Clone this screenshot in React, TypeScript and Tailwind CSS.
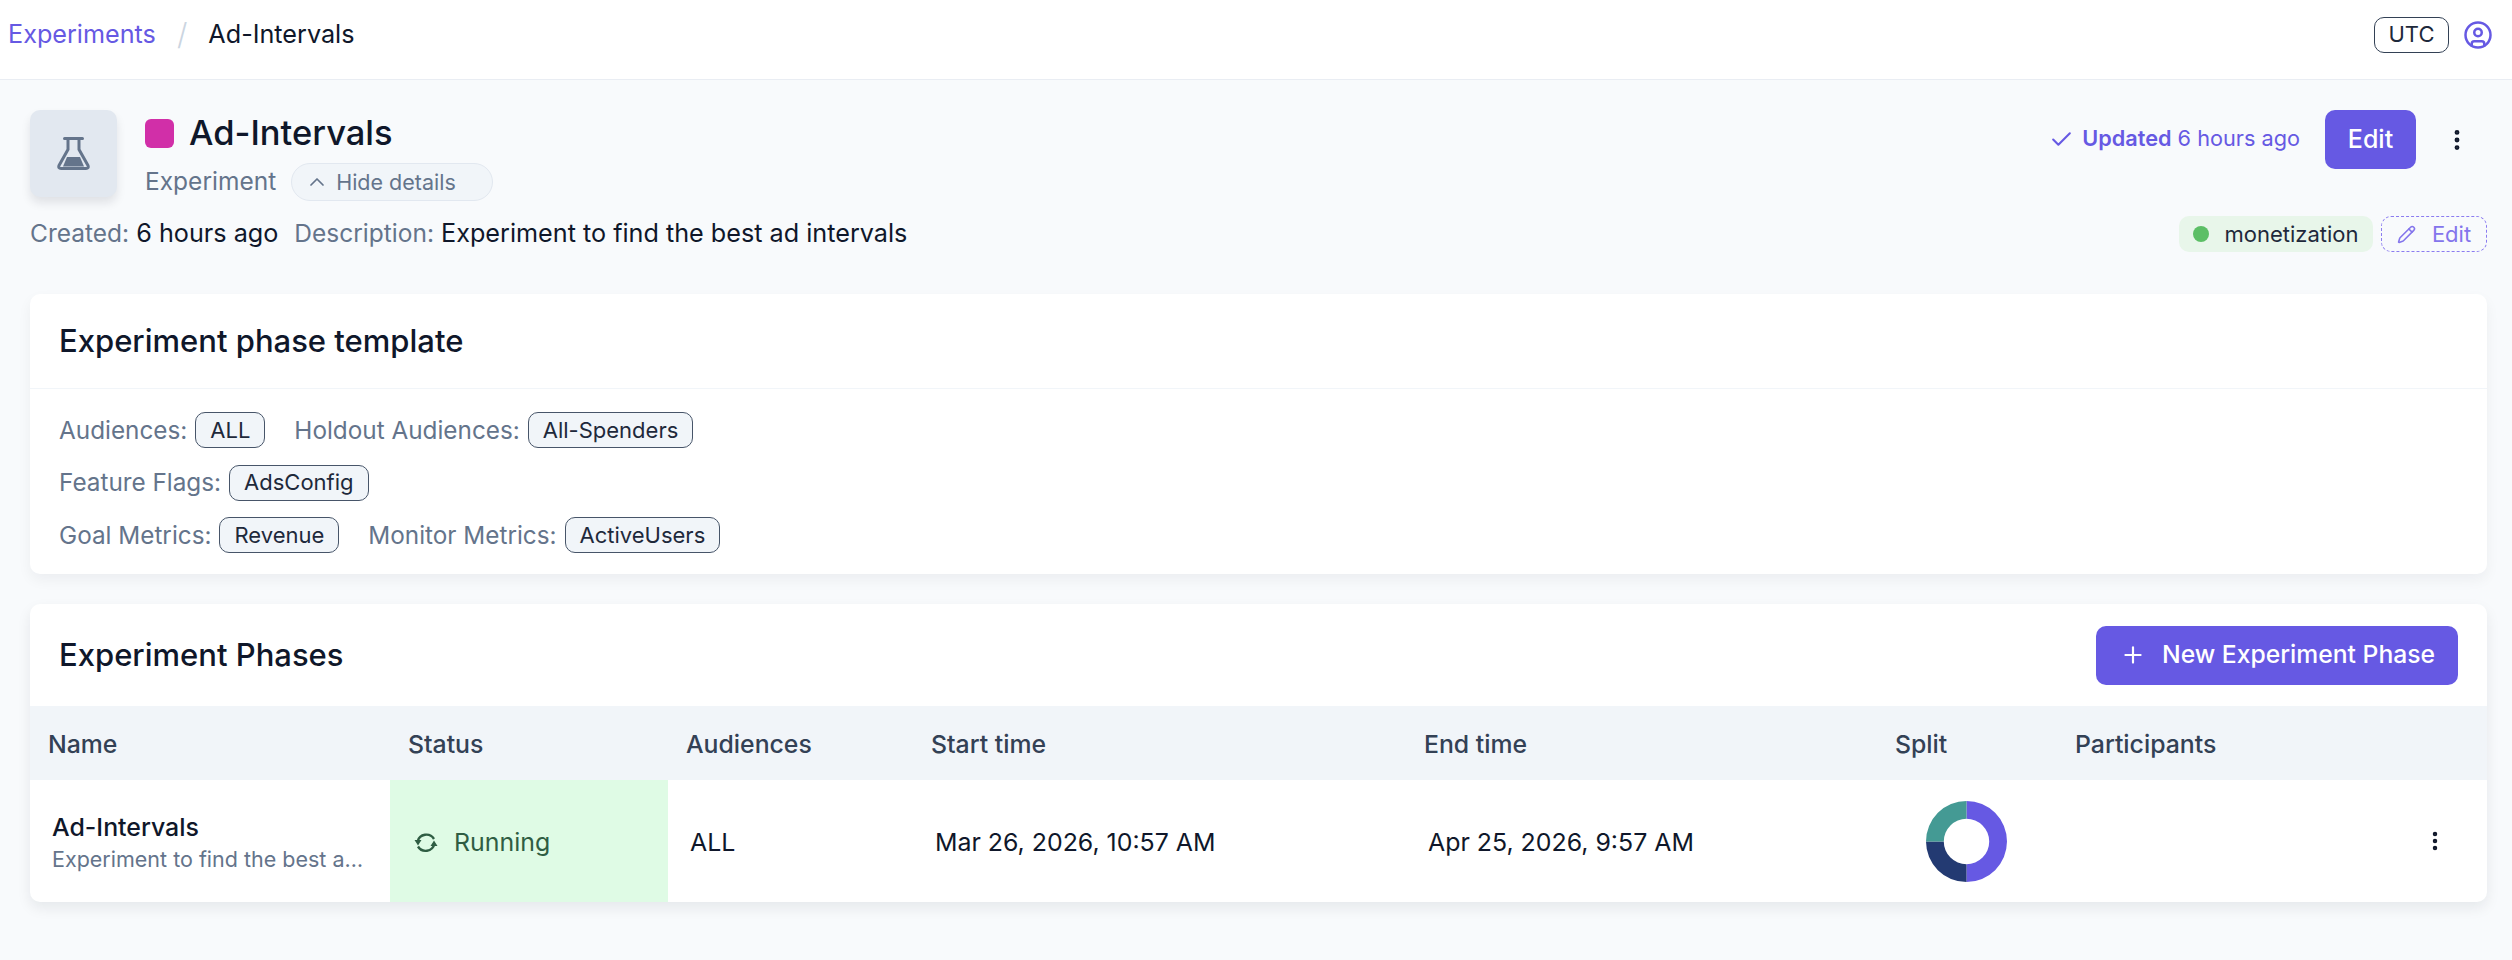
import { Check, ChevronUp, CircleUser, EllipsisVertical, Pencil, Plus } from "lucide-react";

function Pill({ children }: { children: React.ReactNode }) {
  return (
    <span className="inline-flex h-[36px] items-center rounded-[10px] border border-[#475569] bg-[#f1f5f9] px-[14px] text-[22px] text-[#1e293b]">
      {children}
    </span>
  );
}

function Label({ children }: { children: React.ReactNode }) {
  return <span className="mr-[8px] text-[24.3px] text-[#64748b]">{children}</span>;
}

const cols = "grid grid-cols-[360px_278px_245px_493px_471px_180px_430px]";

export default function App() {
  return (
    <div className="min-h-[960px] bg-[#f8fafc] font-['Inter',sans-serif] text-[#0f172a]">
      <header className="flex h-[80px] items-center justify-between border-b border-[#e9edf3] bg-white pb-[10px] pl-[8px] pr-[19px]">
        <nav className="flex items-center text-[25.2px]">
          <span className="text-[#6659e3]">Experiments</span>
          <span className="mx-[21px] text-[30px] font-light leading-none text-[#cbd5e1]">/</span>
          <span>Ad-Intervals</span>
        </nav>
        <div className="flex items-center gap-[14px]">
          <span className="flex h-[36px] w-[75px] items-center justify-center rounded-[10px] border border-[#334155] text-[22px] text-[#1e293b]">UTC</span>
          <CircleUser size={30} strokeWidth={2} className="text-[#6659e3]" />
        </div>
      </header>

      <main className="pl-[30px] pr-[25px] pt-[30px]">
        <section className="flex items-start justify-between">
          <div className="flex gap-[28px]">
            <div className="flex h-[87px] w-[87px] items-center justify-center rounded-[10px] bg-[#e2e8f0] shadow-[0_6px_10px_rgba(15,23,42,0.1)]">
              <svg width="33" height="33" viewBox="0 0 33 33" fill="none" stroke="#64748b" strokeWidth="3" strokeLinecap="round" strokeLinejoin="round">
                <path d="M7.5 1.5h18M11 1.5v11L2 28.5q-1 3 2 3h25q3 0 2-3L22 12.5v-11" />
                <path d="M10 20h13l4 9.5H6z" fill="#64748b" stroke="none" />
              </svg>
            </div>
            <div>
              <div className="flex h-[46px] items-center gap-[15px]">
                <span className="h-[29px] w-[29px] rounded-[6px] bg-[#d12fa8]" />
                <h1 className="text-[34.5px] font-medium leading-none">Ad-Intervals</h1>
              </div>
              <div className="mt-[7px] flex items-center gap-[15px]">
                <span className="mb-[2px] text-[24.5px] leading-none text-[#64748b]">Experiment</span>
                <span className="flex h-[38px] w-[202px] items-center gap-[7px] rounded-full border border-[#e2e8f0] bg-[#f1f5f9] pl-[13px] text-[21.5px] text-[#64748b]">
                  <ChevronUp size={24} strokeWidth={1.75} />
                  Hide details
                </span>
              </div>
            </div>
          </div>
          <div className="flex items-center">
            <Check size={25} className="mr-[8px] text-[#6659e3]" />
            <span className="mb-[2px] text-[21.7px] text-[#6659e3]"><b className="font-semibold">Updated</b> 6 hours ago</span>
            <span className="ml-[25px] flex h-[59px] w-[91px] items-center justify-center rounded-[10px] bg-[#6659e3] text-[25px] font-medium text-white">Edit</span>
            <EllipsisVertical size={26} strokeWidth={2.5} className="ml-[28px] mr-[17px]" />
          </div>
        </section>

        <section className="mt-[15px] flex h-[36px] items-center justify-between">
          <div className="text-[25.2px]">
            <span className="text-[24.5px] text-[#64748b]">Created:</span> 6 hours ago
            <span className="ml-[16px] text-[24.5px] text-[#64748b]">Description:</span> Experiment to find the best ad intervals
          </div>
          <div className="flex items-center gap-[8px]">
            <span className="flex h-[36px] w-[194px] items-center justify-center gap-[15px] rounded-[10px] bg-[#e8f6ea] text-[22px] text-[#1e293b]">
              <span className="h-[16px] w-[16px] rounded-full bg-[#5cbf66]" />
              monetization
            </span>
            <span className="flex h-[36px] w-[106px] items-center justify-center gap-[16px] rounded-[10px] border border-dashed border-[#8b7cf0] text-[22px] text-[#8475ec]">
              <Pencil size={19} />
              Edit
            </span>
          </div>
        </section>

        <section className="mt-[42px] h-[280px] rounded-[10px] bg-white shadow-[0_6px_14px_rgba(15,23,42,0.05)]">
          <h2 className="flex h-[95px] items-center border-b border-[#f1f5f9] pl-[29px] text-[31px] font-medium">Experiment phase template</h2>
          <div className="flex flex-col gap-[16px] pl-[29px] pt-[23px]">
            <div className="flex items-center">
              <Label>Audiences:</Label><Pill>ALL</Pill>
              <span className="ml-[29px]"><Label>Holdout Audiences:</Label></span><Pill>All-Spenders</Pill>
            </div>
            <div className="flex items-center">
              <Label>Feature Flags:</Label><Pill>AdsConfig</Pill>
            </div>
            <div className="flex items-center">
              <Label>Goal Metrics:</Label><Pill>Revenue</Pill>
              <span className="ml-[29px]"><Label>Monitor Metrics:</Label></span><Pill>ActiveUsers</Pill>
            </div>
          </div>
        </section>

        <section className="mt-[30px] overflow-hidden rounded-[10px] bg-white shadow-[0_6px_14px_rgba(15,23,42,0.08)]">
          <div className="flex h-[102px] items-center justify-between pl-[29px] pr-[29px]">
            <h2 className="text-[31px] font-medium">Experiment Phases</h2>
            <span className="flex h-[59px] w-[362px] items-center gap-[16px] rounded-[10px] bg-[#6659e3] pl-[24px] text-[24.7px] font-medium text-white">
              <Plus size={26} strokeWidth={2} />
              New Experiment Phase
            </span>
          </div>
          <div className={`${cols} h-[74px] items-center bg-[#f1f5f9] pt-[3px] text-[24.8px] font-medium text-[#334155]`}>
            <div className="pl-[18px]">Name</div>
            <div className="pl-[18px]">Status</div>
            <div className="pl-[18px]">Audiences</div>
            <div className="pl-[18px]">Start time</div>
            <div className="pl-[18px]">End time</div>
            <div className="pl-[18px]">Split</div>
            <div className="pl-[18px]">Participants</div>
          </div>
          <div className={`${cols} h-[122px] items-stretch text-[24.9px]`}>
            <div className="flex min-w-0 flex-col justify-center pl-[22px] pr-[18px] pt-[2px]">
              <span className="font-medium leading-[32px]">Ad-Intervals</span>
              <span className="mt-[2px] truncate text-[21.5px] leading-[28px] text-[#64748b]">Experiment to find the best ad intervals</span>
            </div>
            <div className="flex items-center gap-[16px] bg-[#dffbe5] pl-[24px] pt-[3px] text-[#2f5d43]">
              <svg width="24" height="24" viewBox="0 0 24 24" fill="none" stroke="currentColor" strokeWidth="2.4">
                <path d="M20 8A9 9 0 0 0 3.6 10.5" />
                <path d="M4 15.5A9 9 0 0 0 20.4 13" />
                <path d="M0.5 9h7L4 14.5z M16.5 15h7L20 9.5z" fill="currentColor" stroke="none" />
              </svg>
              Running
            </div>
            <div className="flex items-center pl-[22px] pt-[3px]">ALL</div>
            <div className="flex items-center pl-[22px] pt-[3px]">Mar 26, 2026, 10:57 AM</div>
            <div className="flex items-center pl-[22px] pt-[3px]">Apr 25, 2026, 9:57 AM</div>
            <div className="flex items-center pl-[49px]">
              <svg width="81" height="81" viewBox="0 0 82 82">
                <path d="M41 0a41 41 0 0 1 0 82V64a23 23 0 0 0 0-46z" fill="#6659e3" />
                <path d="M41 82A41 41 0 0 1 0 41h18a23 23 0 0 0 23 23z" fill="#233a72" />
                <path d="M0 41A41 41 0 0 1 41 0v18a23 23 0 0 0-23 23z" fill="#449a94" />
              </svg>
            </div>
            <div className="flex items-center justify-end pr-[40px]">
              <EllipsisVertical size={24} strokeWidth={2.5} />
            </div>
          </div>
        </section>
      </main>
    </div>
  );
}
